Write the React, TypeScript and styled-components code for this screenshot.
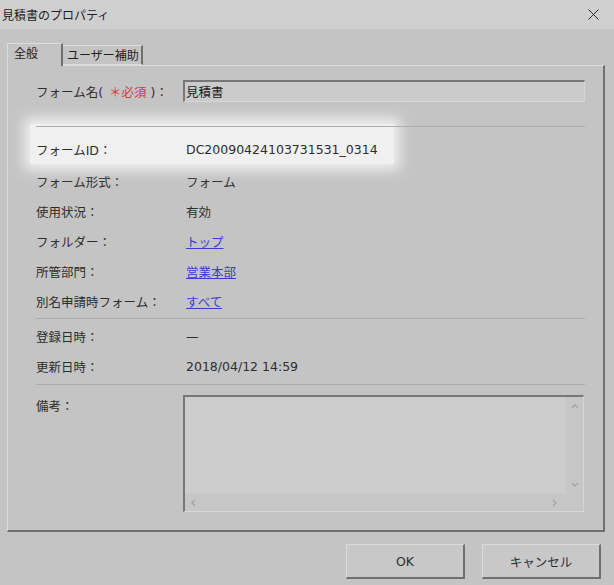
import styled, { createGlobalStyle } from "styled-components";

const GlobalStyle = createGlobalStyle`
  html, body {
    margin: 0;
    padding: 0;
    background: #c4c4c4;
  }
  body {
    font-family: "DejaVu Sans", "Noto Sans CJK JP", sans-serif;
    font-size: 12.5px;
    color: #2e2e2e;
  }
`;

const Window = styled.div`
  width: 614px;
  height: 585px;
  display: flex;
  flex-direction: column;
  background: #c4c4c4;
  overflow: hidden;
`;

const TitleBar = styled.div`
  height: 29px;
  flex: none;
  display: flex;
  align-items: center;
  justify-content: space-between;
  padding: 0 14px 0 2px;
  background: #cfcfcf;
  font-size: 12px;
  color: #1e1e1e;
`;

const CloseButton = styled.button`
  border: none;
  background: none;
  padding: 0;
  width: 14px;
  height: 14px;
  display: flex;
  align-items: center;
  justify-content: center;
  color: #2a2a2a;
  cursor: pointer;
`;

const Body = styled.div`
  flex: 1;
  display: flex;
  flex-direction: column;
  padding: 14px 9px 0 7px;
`;

const TabStrip = styled.div`
  display: flex;
  align-items: flex-end;
  height: 22px;
  position: relative;
  z-index: 2;
`;

const Tab = styled.div<{ $active?: boolean }>`
  box-sizing: border-box;
  height: ${({ $active }) => ($active ? "23px" : "20px")};
  margin-bottom: ${({ $active }) => ($active ? "-1px" : "0")};
  padding: ${({ $active }) => ($active ? "2px 0 0 6px" : "2px 0 0 4px")};
  width: ${({ $active }) => ($active ? "56px" : "80px")};
  background: #c4c4c4;
  border-top: 1px solid #dcdcdc;
  border-left: ${({ $active }) => ($active ? "1px solid #dcdcdc" : "none")};
  border-right: 2px solid #707070;
  border-bottom: ${({ $active }) => ($active ? "none" : "1px solid #dcdcdc")};
  font-size: 12px;
  line-height: 17px;
  color: #1e1e1e;
  white-space: nowrap;
`;

const Panel = styled.div`
  box-sizing: border-box;
  width: 598px;
  height: 467px;
  border-top: 1px solid #dcdcdc;
  border-left: 1px solid #dcdcdc;
  border-right: 2px solid #707070;
  border-bottom: 2px solid #707070;
  padding: 14px 18px 0 28px;
  display: flex;
  flex-direction: column;
`;

const Row = styled.div<{ $h?: number }>`
  display: grid;
  grid-template-columns: 147px 1fr;
  align-items: center;
  height: ${({ $h }) => $h ?? 30}px;
`;

const Label = styled.div`
  white-space: nowrap;
`;

const Value = styled.div`
  padding-left: 3px;
  white-space: nowrap;
`;

const Required = styled.span`
  color: #d23c3c;
  margin: 0 4px 0 6px;
`;

const TextInput = styled.div`
  box-sizing: border-box;
  height: 22px;
  background: #cbcbcb;
  border-top: 2px solid #777;
  border-left: 2px solid #777;
  border-right: 1px solid #d6d6d6;
  border-bottom: 1px solid #d6d6d6;
  padding-left: 1px;
  display: flex;
  align-items: center;
  color: #1e1e1e;
`;

const Separator = styled.div<{ $mt: number; $mb?: number }>`
  height: 1px;
  background: #adadad;
  margin-top: ${({ $mt }) => $mt}px;
  margin-bottom: ${({ $mb }) => $mb ?? 0}px;
`;

/* ハイライト(ID 行を照らす光) */
const Spotlight = styled.div`
  position: relative;
  margin-top: 24px;

  &::before {
    content: "";
    position: absolute;
    left: -6px;
    top: -2px;
    width: 364px;
    height: 40px;
    background: #f0f0f0;
    box-shadow: 0 0 12px 6px #f0f0f0;
    z-index: 0;
  }

  & > * {
    position: relative;
    z-index: 1;
  }
`;

const Spacer = styled.div`
  height: 2px;
`;

const StyledLink = styled.a`
  color: #3c3ccf;
  text-decoration: underline;
  cursor: pointer;
`;

const NotesRow = styled.div`
  display: grid;
  grid-template-columns: 147px 1fr;
  align-items: start;
`;

const NotesLabel = styled.div`
  padding-top: 1px;
`;

const NotesBox = styled.div`
  box-sizing: border-box;
  width: 401px;
  height: 117px;
  border-top: 2px solid #777;
  border-left: 2px solid #777;
  border-right: 1px solid #d6d6d6;
  border-bottom: 1px solid #d6d6d6;
  display: grid;
  grid-template-columns: 1fr 17px;
  grid-template-rows: 1fr 17px;
  background: #c6c6c6;
`;

const NotesArea = styled.div`
  background: #cccccc;
`;

const ScrollV = styled.div`
  display: flex;
  flex-direction: column;
  justify-content: space-between;
  align-items: center;
  padding: 6px 0 5px;
`;

const ScrollH = styled.div`
  display: flex;
  justify-content: space-between;
  align-items: center;
  padding: 0 7px 0 5px;
`;

const Corner = styled.div`
  background: #c6c6c6;
`;

const Footer = styled.div`
  display: flex;
  justify-content: flex-end;
  gap: 17px;
  padding: 12px 4px 0 0;
`;

const Button = styled.button`
  box-sizing: border-box;
  width: 119px;
  height: 35px;
  background: #c8c8c8;
  border-top: 1px solid #dadada;
  border-left: 1px solid #dadada;
  border-right: 2px solid #6f6f6f;
  border-bottom: 2px solid #6f6f6f;
  font-family: "DejaVu Sans", "Noto Sans CJK JP", sans-serif;
  font-size: 12.5px;
  color: #2e2e2e;
  cursor: pointer;
`;

const Chevron = ({ dir }: { dir: "up" | "down" | "left" | "right" }) => {
  const d = {
    up: "M1 5 L4 2 L7 5",
    down: "M1 2 L4 5 L7 2",
    left: "M5 1 L2 4 L5 7",
    right: "M2 1 L5 4 L2 7",
  }[dir];
  return (
    <svg width="8" height="8" viewBox="0 0 8 8">
      <path d={d} fill="none" stroke="#a4a4a4" strokeWidth="1.4" />
    </svg>
  );
};

const info = [
  { label: "フォーム形式：", value: "フォーム" },
  { label: "使用状況：", value: "有効" },
  { label: "フォルダー：", value: "トップ", link: true },
  { label: "所管部門：", value: "営業本部", link: true },
  { label: "別名申請時フォーム：", value: "すべて", link: true },
];

export default function App() {
  return (
    <Window>
      <GlobalStyle />
      <TitleBar>
        <span>見積書のプロパティ</span>
        <CloseButton aria-label="閉じる">
          <svg width="11" height="11" viewBox="0 0 11 11">
            <path d="M0.5 0.5 L10.5 10.5 M10.5 0.5 L0.5 10.5" stroke="#2a2a2a" strokeWidth="1" />
          </svg>
        </CloseButton>
      </TitleBar>

      <Body>
        <TabStrip>
          <Tab $active>全般</Tab>
          <Tab>ユーザー補助</Tab>
        </TabStrip>

        <Panel>
          <Row $h={22}>
            <Label>
              フォーム名(<Required>＊必須</Required>)：
            </Label>
            <TextInput>見積書</TextInput>
          </Row>

          <Spotlight>
            <Separator $mt={0} $mb={7} />
            <Row>
              <Label>フォームID：</Label>
              <Value>DC20090424103731531_0314</Value>
            </Row>
          </Spotlight>

          <Spacer />
          {info.map((it) => (
            <Row key={it.label}>
              <Label>{it.label}</Label>
              <Value>{it.link ? <StyledLink>{it.value}</StyledLink> : it.value}</Value>
            </Row>
          ))}

          <Separator $mt={2} $mb={2} />
          <Row>
            <Label>登録日時：</Label>
            <Value>—</Value>
          </Row>
          <Row>
            <Label>更新日時：</Label>
            <Value>2018/04/12 14:59</Value>
          </Row>
          <Separator $mt={3} $mb={10} />

          <NotesRow>
            <NotesLabel>備考：</NotesLabel>
            <NotesBox>
              <NotesArea />
              <ScrollV>
                <Chevron dir="up" />
                <Chevron dir="down" />
              </ScrollV>
              <ScrollH>
                <Chevron dir="left" />
                <Chevron dir="right" />
              </ScrollH>
              <Corner />
            </NotesBox>
          </NotesRow>
        </Panel>

        <Footer>
          <Button>OK</Button>
          <Button>キャンセル</Button>
        </Footer>
      </Body>
    </Window>
  );
}
